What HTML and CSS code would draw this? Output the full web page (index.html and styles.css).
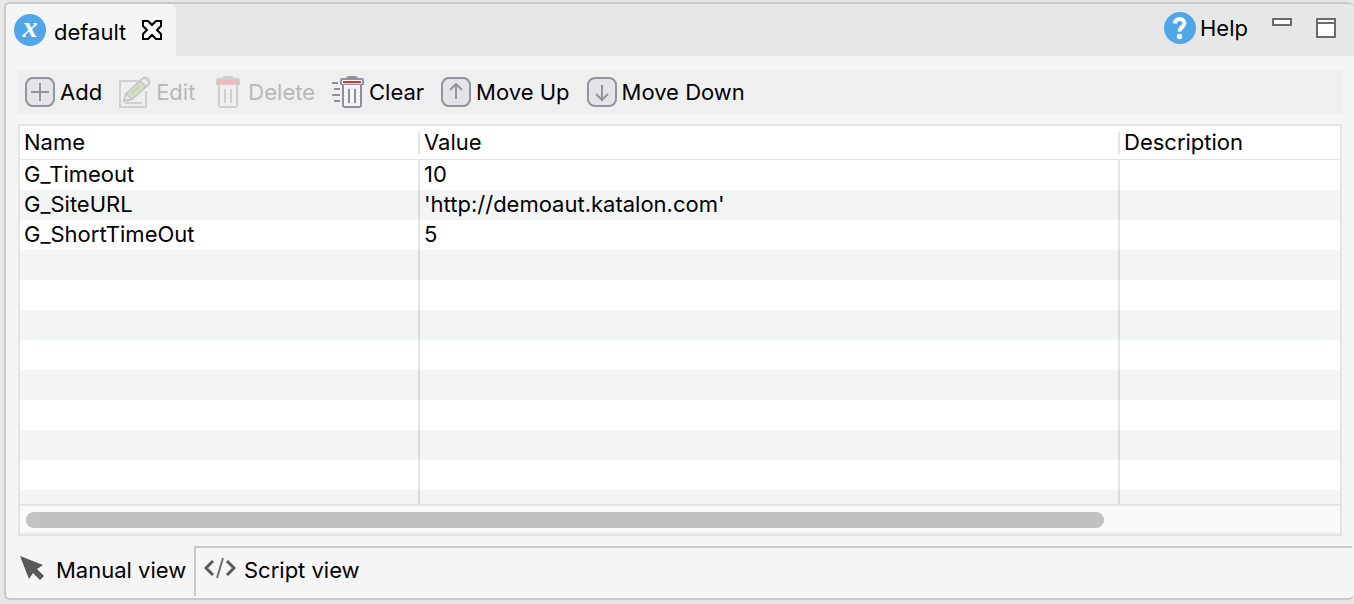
FILE: index.html
```html
<!DOCTYPE html>
<html lang="en">
<head>
<meta charset="utf-8">
<title>default</title>
<link rel="stylesheet" href="styles.css">
</head>
<body>
<main class="panel">
  <header class="tabbar">
    <div class="tab">
      <svg class="badge" width="32" height="32" viewBox="0 0 32 32" aria-hidden="true">
        <circle cx="16" cy="16" r="16" fill="#4fa6e8"/>
        <text class="badge-letter" x="16" y="23" text-anchor="middle">x</text>
      </svg>
      <span class="tab-title">default</span>
      <button class="icon-button close" type="button" aria-label="Close">
        <svg width="22" height="22" viewBox="0 0 22 22"><path d="M2 2H7L11 6L15 2H20V7L16 11L20 15V20H15L11 16L7 20H2V15L6 11L2 7Z" fill="#fff" stroke="#000" stroke-width="2"/></svg>
      </button>
    </div>
    <div class="window-tools">
      <button class="help" type="button">
        <svg class="badge" width="32" height="32" viewBox="0 0 32 32" aria-hidden="true">
          <circle cx="16" cy="16" r="16" fill="#4fa6e8"/>
          <path d="M10.800 11.500C11.200 5.500 20.800 5.700 20.400 11.500C20.200 14.800 15.600 14.800 15.600 19.600" fill="none" stroke="#fff" stroke-width="4"/>
          <circle cx="15.500" cy="24.400" r="2.700" fill="#fff"/>
        </svg>
        Help
      </button>
      <button class="icon-button" type="button" aria-label="Minimize">
        <svg width="20" height="20" viewBox="0 0 20 20"><path d="M1 1H19V7H1Z" fill="#fff" stroke="#6b6b6b" stroke-width="2"/></svg>
      </button>
      <button class="icon-button" type="button" aria-label="Maximize">
        <svg width="20" height="20" viewBox="0 0 20 20"><path d="M1 1H19V19H1ZM1 5H19" fill="#fff" stroke="#6b6b6b" stroke-width="2"/></svg>
      </button>
    </div>
  </header>

  <section class="content">
    <div class="toolbar" role="toolbar" aria-label="Variables">
      <button class="tool" type="button">
        <svg width="30" height="30" viewBox="0 0 30 30" aria-hidden="true"><rect x="1" y="1" width="28" height="28" rx="7" fill="#e5e3e5" stroke="#8f959f" stroke-width="2"/><path d="M15 6V24M6 15H24" stroke="#8f959f" stroke-width="2"/></svg>
        Add
      </button>
      <button class="tool" type="button" disabled>
        <svg width="32" height="32" viewBox="0 0 32 32" aria-hidden="true"><path d="M19 5H1V31H27V15M6 27H23" fill="none" stroke="#cfcfcf" stroke-width="2"/><path d="M5 25L7 18L23 3Q26 0 29 3T29 9L13 23Z" fill="#d5e3bf" stroke="#cacaca" stroke-width="2"/><path d="M21 5L27 11" stroke="#cacaca" stroke-width="2"/><path d="M24 4L28 8" stroke="#efefef" stroke-width="3"/><path d="M7 18L13 23L5 25Z" fill="#eee" stroke="#cacaca" stroke-width="2"/><path d="M12 18L21 10" stroke="#c7cfbe" stroke-width="2"/></svg>
        Edit
      </button>
      <button class="tool delete" type="button" disabled>
        <svg width="24" height="32" viewBox="0 0 24 32" aria-hidden="true"><path d="M6 2Q7 0 9 0H15Q17 0 18 2H22Q24 2 24 5V9H0V5Q0 2 2 2Z" fill="#cfcfcf"/><path d="M2 4H22V8H2Z" fill="#edbcbc"/><path d="M3 9V29Q3 31 5 31H19Q21 31 21 29V9M9 13V27M15 13V27" fill="none" stroke="#cfcfcf" stroke-width="2"/></svg>
        Delete
      </button>
      <button class="tool" type="button">
        <svg width="32" height="32" viewBox="0 0 32 32" aria-hidden="true"><path d="M14 2Q15 0 17 0H23Q25 0 26 2H30Q32 2 32 5V9H8V5Q8 2 10 2Z" fill="#8b909c"/><path d="M10 4H30V8H10Z" fill="#fff"/><path d="M11 6H29" stroke="#ed2929" stroke-width="2"/><path d="M11 9V29Q11 31 13 31H27Q29 31 29 29V9" fill="#f5f5f5" stroke="#8b909c" stroke-width="2"/><path d="M17 13V27M23 13V27M0 7H6M2 13H8M0 19H8M2 25H8" fill="none" stroke="#8b909c" stroke-width="2"/></svg>
        Clear
      </button>
      <button class="tool" type="button">
        <svg width="30" height="30" viewBox="0 0 30 30" aria-hidden="true"><rect x="1" y="1" width="28" height="28" rx="7" fill="#e5e3e5" stroke="#8f959f" stroke-width="2"/><path d="M15 22V7M9 13L15 7L21 13" fill="none" stroke="#8f959f" stroke-width="2"/></svg>
        Move Up
      </button>
      <button class="tool" type="button">
        <svg width="30" height="30" viewBox="0 0 30 30" aria-hidden="true"><rect x="1" y="1" width="28" height="28" rx="7" fill="#e5e3e5" stroke="#8f959f" stroke-width="2"/><path d="M15 8V23M9 17L15 23L21 17" fill="none" stroke="#8f959f" stroke-width="2"/></svg>
        Move Down
      </button>
    </div>

    <div class="grid">
      <div class="viewport">
        <table class="variables">
          <colgroup><col class="col-name"><col class="col-value"><col></colgroup>
          <thead><tr><th scope="col"><span>Name</span></th><th scope="col"><span>Value</span></th><th scope="col"><span>Description</span></th></tr></thead>
          <tbody>
            <tr><td>G_Timeout</td><td>10</td><td></td></tr>
            <tr><td>G_SiteURL</td><td>'http://demoaut.katalon.com'</td><td></td></tr>
            <tr><td>G_ShortTimeOut</td><td>5</td><td></td></tr>
            <tr><td></td><td></td><td></td></tr>
            <tr><td></td><td></td><td></td></tr>
            <tr><td></td><td></td><td></td></tr>
            <tr><td></td><td></td><td></td></tr>
            <tr><td></td><td></td><td></td></tr>
            <tr><td></td><td></td><td></td></tr>
            <tr><td></td><td></td><td></td></tr>
            <tr><td></td><td></td><td></td></tr>
            <tr><td></td><td></td><td></td></tr>
          </tbody>
        </table>
      </div>
      <div class="scroll-track"><div class="scroll-thumb"></div></div>
    </div>
  </section>

  <nav class="views" aria-label="Views">
    <button class="view active" type="button">
      <svg width="26" height="26" viewBox="0 0 26 26" aria-hidden="true"><path d="M0 1L23 10L17 14L24 21L20 25L13 18L9 24Z" fill="#595959"/></svg>
      Manual view
    </button>
    <button class="view script" type="button">
      <svg width="32" height="22" viewBox="0 0 32 22" aria-hidden="true"><path d="M9 4L2 11L9 18M23 4L30 11L23 18" fill="none" stroke="#595959" stroke-width="3"/><path d="M19 1L13 21" stroke="#707070" stroke-width="2"/></svg>
      Script view
    </button>
  </nav>
</main>
</body>
</html>
```
FILE: styles.css
```css
* {
  box-sizing: border-box;
}

body {
  display: flex;
  height: 100vh;
  margin: 0;
  padding: 2px 0 4px 4px;
  background: #e7e7e7;
  color: #000;
  font: 22px/30px Inter, "Liberation Sans", sans-serif;
}

button {
  display: flex;
  align-items: center;
  padding: 0;
  border: 0;
  background: none;
  color: inherit;
  font: inherit;
  white-space: nowrap;
}

svg {
  display: block;
  flex: none;
}

.badge {
  overflow: visible;
}

.badge-letter {
  fill: #fff;
  font: italic bold 30px "Liberation Serif", serif;
}

.panel {
  display: flex;
  flex: 1;
  flex-direction: column;
  min-width: 0;
  overflow: hidden;
  border: 2px solid #c8c8c8;
  border-right: 0;
  border-radius: 6px;
  background: #f5f5f5;
}

.tabbar {
  display: flex;
  justify-content: space-between;
  height: 52px;
  flex: none;
  background: #e7e7e7;
}

.tab {
  display: flex;
  align-items: center;
  gap: 8px;
  width: 170px;
  padding-left: 8px;
  border-radius: 0 6px 0 0;
  background: #f5f5f5;
}

.tab-title {
  padding-top: 4px;
}

.close {
  margin-left: 7px;
}

.window-tools {
  display: flex;
  align-items: flex-start;
  gap: 24px;
  padding: 14px 18px 0 0;
}

.help {
  align-self: flex-start;
  gap: 4px;
  height: 20px;
}

.content {
  display: flex;
  flex: 1;
  flex-direction: column;
  gap: 10px;
  min-height: 0;
  padding: 14px 12px 10px;
}

.toolbar {
  display: flex;
  flex: none;
  align-items: center;
  gap: 17px;
  height: 44px;
  padding-left: 7px;
  background: #efefef;
}

.tool {
  gap: 5px;
}

.tool:disabled {
  color: #b8b8b8;
}

.delete {
  gap: 8px;
  padding-left: 4px;
}

.grid {
  display: flex;
  flex: 1;
  flex-direction: column;
  min-height: 0;
  border: 2px solid #e4e4e4;
  background: #fff;
}

.viewport {
  flex: 1;
  min-height: 0;
  overflow: hidden;
}

.variables {
  width: 100%;
  border-spacing: 0;
  table-layout: fixed;
}

.col-name {
  width: 400px;
}

.col-value {
  width: 700px;
}

th {
  height: 34px;
  padding: 0;
  border-bottom: 1px solid #e2e2e2;
  font-weight: 400;
  text-align: left;
}

th span {
  display: block;
  padding: 0 4px 2px;
  border-right: 2px solid #e4e4e4;
  line-height: 20px;
}

th:last-child span {
  border-right: 0;
}

td {
  height: 30px;
  padding: 0 4px 2px;
  border-right: 2px solid rgba(0, 0, 0, 0.1);
  line-height: 28px;
}

td:last-child {
  border-right: 0;
}

tbody tr:nth-child(even) {
  background: #f3f4f4;
}

.scroll-track {
  flex: none;
  height: 30px;
  padding: 6px;
  border-top: 2px solid #e4e4e4;
  border-bottom: 2px solid #efefef;
  background: #fafafa;
}

.scroll-thumb {
  width: 82.4%;
  height: 16px;
  border-radius: 8px;
  background: #c1c1c1;
}

.views {
  display: flex;
  flex: none;
  height: 52px;
  padding-right: 2px;
}

.view {
  padding-bottom: 4px;
}

.view svg {
  margin-bottom: 4px;
}

.active {
  gap: 10px;
  width: 188px;
  padding-left: 14px;
}

.script {
  flex: 1;
  gap: 8px;
  height: 50px;
  padding-left: 8px;
  border-top: 2px solid #c8c8c8;
  border-left: 2px solid #c8c8c8;
}
```
